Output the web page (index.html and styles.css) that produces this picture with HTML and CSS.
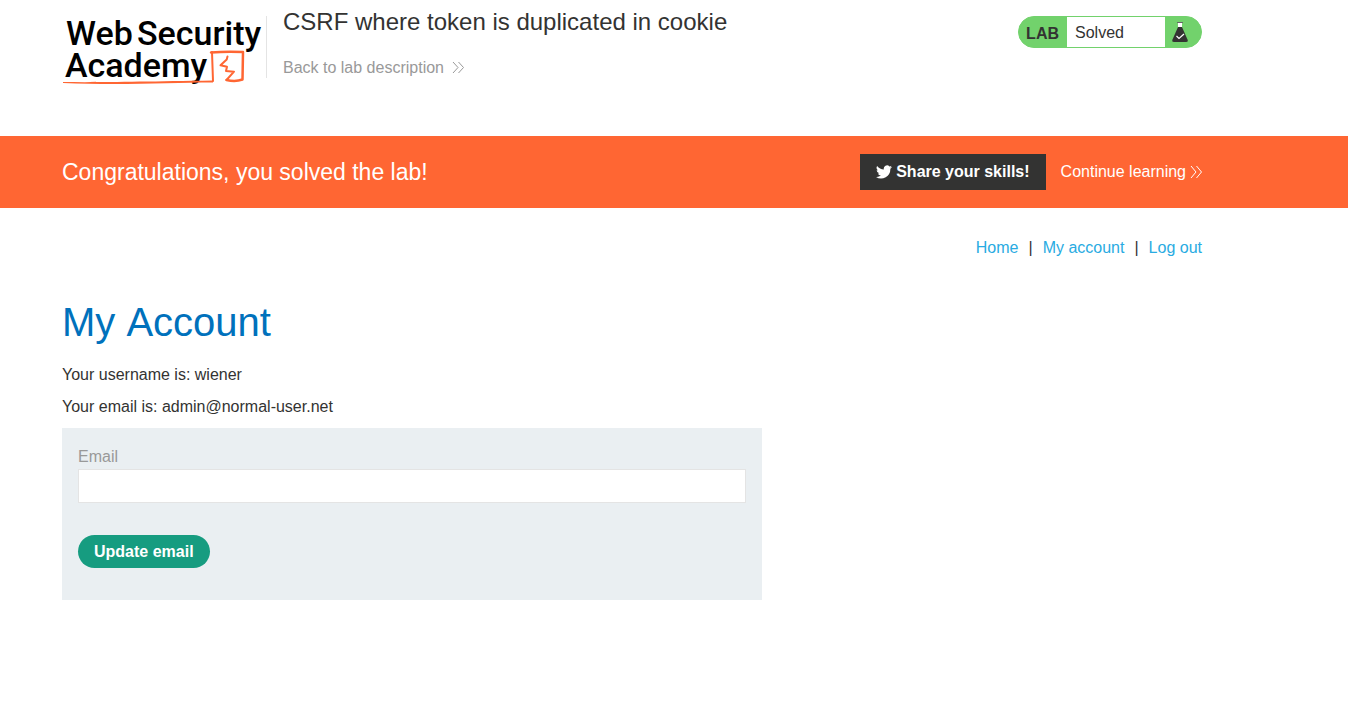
FILE: index.html
```html
<!DOCTYPE html>
<html lang="en">
<head>
<meta charset="utf-8">
<title>CSRF where token is duplicated in cookie</title>
<link rel="stylesheet" href="styles.css">
</head>
<body>
<header class="lab-header">
  <div class="container header-row">
    <svg class="logo" width="204" height="72" viewBox="0 0 204 72" role="img" aria-label="Web Security Academy">
      <g class="logo-text">
        <text x="4" y="29">Web</text>
        <text x="75" y="29">Security</text>
        <text x="3" y="61">Academy</text>
      </g>
      <g class="logo-mark">
        <path class="logo-line" d="M1 66C40 66.500 80 65.500 151 64.500V66.500C110 66.500 60 69.500 1 67Z"/>
        <path stroke-width="2" d="M151 65L150 36"/>
        <path stroke-width="2.500" d="M149 36.500C160 35.500 172 35.500 181 36L180.500 63.500C175 65.500 169 65 164.500 64"/>
        <path stroke-width="2" d="M165.500 40.500L164.700 43.500L158.500 49.300L165 50.700L164 55L172 55.700L164.500 64"/>
      </g>
    </svg>
    <div class="title-block">
      <h2 class="lab-title">CSRF where token is duplicated in cookie</h2>
      <a class="back-link" href="#">Back to lab description
        <svg class="chevrons" width="12" height="14" viewBox="0 0 12 14" aria-hidden="true"><path d="M1 1L6 6.500L1 12M6.500 1L11.500 6.500L6.500 12"/></svg>
      </a>
    </div>
    <div class="lab-status">
      <span class="status-label">LAB</span>
      <span class="status-value">Solved</span>
      <span class="status-icon">
        <svg width="18" height="20" viewBox="0 0 18 20" aria-hidden="true">
          <path fill="#fff" d="M7 1H11V7H7Z"/>
          <path fill="#666" d="M6 0H12V1H6Z"/>
          <path fill="#333332" d="M7 5H11L16.500 17.500Q17.500 20 15 20H3Q.5 20 1.500 17.500Z"/>
          <path fill="none" stroke="#fff" stroke-width="1.200" d="M5.500 14L8 16.500L13 12"/>
        </svg>
      </span>
    </div>
  </div>
</header>
<section class="banner">
  <div class="container banner-row">
    <h4 class="banner-title">Congratulations, you solved the lab!</h4>
    <button class="share" type="button">
      <svg width="16" height="14" viewBox="0 0 24 20" aria-hidden="true"><path fill="#fff" d="M24 2.400a9.800 9.800 0 0 1-2.800.8A4.900 4.900 0 0 0 23.300.5a9.900 9.900 0 0 1-3.100 1.200 4.900 4.900 0 0 0-8.400 4.500A14 14 0 0 1 1.700 1a4.900 4.900 0 0 0 1.500 6.600A4.900 4.900 0 0 1 1 7v.1a4.900 4.900 0 0 0 3.900 4.800 4.900 4.900 0 0 1-2.200.1 4.900 4.900 0 0 0 4.600 3.400A9.900 9.900 0 0 1 0 17.500 14 14 0 0 0 21.500 5Q23 4 24 2.400Z"/></svg>
      <span>Share your skills!</span>
    </button>
    <a class="continue" href="#">Continue learning
      <svg class="chevrons" width="12" height="14" viewBox="0 0 12 14" aria-hidden="true"><path d="M1 1L6 7L1 13M6.500 1L11.500 7L6.500 13"/></svg>
    </a>
  </div>
</section>
<main class="container content">
  <nav class="nav">
    <a href="#">Home</a><span>|</span><a href="#">My account</a><span>|</span><a href="#">Log out</a>
  </nav>
  <h1 class="page-title">My Account</h1>
  <p class="detail">Your username is: wiener</p>
  <p class="detail">Your email is: admin@normal-user.net</p>
  <form class="email-form">
    <label for="email">Email</label>
    <input id="email" type="email" name="email">
    <button class="update" type="submit">Update email</button>
  </form>
</main>
</body>
</html>
```
FILE: styles.css
```css
* { box-sizing: border-box; }
body {
  margin: 0;
  background: #fff;
  color: #333332;
  font: 16px/20px "Liberation Sans", Arial, sans-serif;
}
h1, h2, h4, p { margin: 0; font-weight: 400; }
a { text-decoration: none; }
.container { max-width: 1264px; padding: 0 62px; }
.header-row { display: flex; align-items: flex-start; padding-top: 16px; min-height: 136px; }
.logo { flex: none; display: block; overflow: visible; }
.logo-text { fill: #000; font: 500 34px Roboto, sans-serif; }
.logo-mark { fill: none; stroke: #ff6633; stroke-linecap: round; stroke-linejoin: round; }
.logo-line { fill: #ff6633; stroke: none; }
.title-block {
  flex: 1;
  height: 62px;
  padding-left: 16px;
  border-left: 1px solid #e4e4e4;
}
.lab-title { font-size: 24px; line-height: 28px; margin-top: -8px; }
.back-link { display: inline-flex; align-items: center; gap: 8px; margin-top: 22px; color: #999; }
.chevrons { fill: none; stroke: currentColor; stroke-width: 1; }
.lab-status {
  display: flex;
  height: 32px;
  border: 1px solid #72d26c;
  border-radius: 16px;
  background: #72d26c;
  line-height: 32px;
}
.status-label { padding: 1px 8px 0 7px; font-weight: 700; }
.status-value { width: 98px; padding-left: 8px; background: #fff; }
.status-icon { display: flex; align-items: center; width: 36px; padding-left: 6px; }
.banner { background: #ff6633; color: #fff; }
.banner-row { display: flex; align-items: center; min-height: 72px; }
.banner-title { flex: 1; font-size: 23px; line-height: 28px; }
.share {
  display: flex;
  align-items: center;
  gap: 4px;
  height: 36px;
  padding: 0 16px;
  border: 0;
  background: #333332;
  color: #fff;
  font: 700 16px/20px "Liberation Sans", Arial, sans-serif;
}
.continue { display: flex; align-items: center; gap: 4px; margin-left: 15px; color: #fff; }
.nav { display: flex; justify-content: flex-end; gap: 10px; padding-top: 30px; }
.nav a { color: #29abe2; }
.page-title { margin-top: 40px; color: #0071bc; font-size: 40px; line-height: 48px; font-kerning: none; }
.detail { margin-top: 12px; }
.page-title + .detail { margin-top: 19px; }
.email-form {
  max-width: 700px;
  margin-top: 11px;
  padding: 19px 16px 32px;
  background: #eaeff2;
}
.email-form label { display: block; color: #999; }
.email-form input {
  display: block;
  width: 100%;
  height: 34px;
  margin-top: 2px;
  padding: 0 8px;
  border: 1px solid #e4e4e4;
  background: #fff;
  font: inherit;
}
.update {
  display: block;
  height: 33px;
  margin-top: 32px;
  padding: 0 16px;
  border: 0;
  border-radius: 17px;
  background: #169c80;
  color: #fff;
  font: 700 16px/20px "Liberation Sans", Arial, sans-serif;
}
```
